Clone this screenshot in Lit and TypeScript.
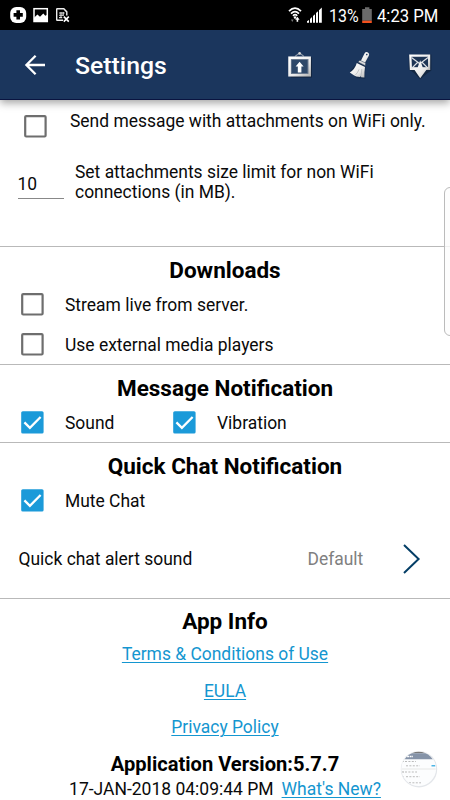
import { LitElement, html, css, svg } from "lit";
import { customElement, property } from "lit/decorators.js";

@customElement("check-box")
class CheckBox extends LitElement {
  @property({ type: Boolean }) checked = false;
  static styles = css`
    :host { display: block; width: 23px; height: 23px; flex: none; }
    svg { display: block; }
  `;
  render() {
    return html`<svg width="23" height="23" viewBox="0 0 23 23">
      ${this.checked
        ? svg`<rect x="0.2" y="0.2" width="22.4" height="22.3" rx="1.6" fill="#1b9ad9"/>
              <path d="M3.4 11.4 L8.9 16.8 L19.6 6" fill="none" stroke="#fff" stroke-width="2.3"/>`
        : svg`<rect x="1.2" y="1.1" width="20.4" height="20.4" rx="1" fill="#fff" stroke="#6e6e6e" stroke-width="2.2"/>`}
    </svg>`;
  }
}

@customElement("status-bar")
class StatusBar extends LitElement {
  static styles = css`
    :host { display: flex; height: 30px; background: #000; color: #fff; box-sizing: border-box; justify-content: space-between; }
    svg { display: block; flex: none; }
    .txt { font-size: 18.5px; line-height: 32px; height: 30px; white-space: nowrap; transform-origin: 0 50%; }
    .pct { width: 29px; transform: scaleX(0.86); }
    .time { width: 73px; transform: scaleX(0.9); }
    .right { display: flex; }
  `;
  render() {
    return html`
      <svg width="80" height="30" viewBox="0 0 80 30">
        <rect x="10.2" y="7" width="16" height="16" rx="6" fill="#fff"/>
        <path d="M18.2 10.3v9.2M13.6 14.9h9.2" stroke="#000" stroke-width="3.6"/>
        <rect x="34" y="8.7" width="13.3" height="12.8" fill="none" stroke="#fff" stroke-width="1.5"/>
        <path d="M34 21.5v-3.7l3.4-3.2 2.6 2.2 3.3-3.2 2 2.2 2-1v6.7z" fill="#fff"/>
        <path d="M63 20.3h-5.8a.5.5 0 0 1-.5-.5V9.2a.5.5 0 0 1 .5-.5h6.6l3 3.2v3.7" fill="none" stroke="#eee" stroke-width="1.4"/>
        <path d="M59 13h5.6M59 15.3h4.6M59 17.6h3.2M61 12v6M63.2 12v4" fill="none" stroke="#ddd" stroke-width="1.1"/>
        <path d="M63.8 16.6l5 5M68.8 16.6l-5 5" stroke="#fff" stroke-width="1.6"/>
      </svg>
      <div class="right">
        <svg width="41" height="30" viewBox="288 0 41 30">
          <path d="M289 11.2q6-6.2 12 0M291 13.6q4-4 8 0M293 15.8q2.1-2.2 4.2 0" fill="none" stroke="#fff" stroke-width="1.7"/>
          <circle cx="295" cy="17.5" r="1.2" fill="#fff"/>
          <path d="M291 19.5h2.6l-1.3 2.5z" fill="#777"/>
          <path d="M297.4 21.8v-3" stroke="#fff" stroke-width="1.6"/>
          <path d="M295.2 19.7h4.4l-2.2-2.9z" fill="#fff"/>
          <path d="M307 22.8v-1.5l2-1.3v2.8zM310 22.8v-3.9l2-1.8v5.7zM313 22.8v-6.7l2-1.9v8.6zM316 22.8v-9.7l2-1.9v11.6zM319 22.8v-12.6l2.8-2.7v15.3z" fill="#fff"/>
        </svg>
        <div class="txt pct">13%</div>
        <svg width="19" height="30" viewBox="358 0 19 30">
          <path d="M365 7.2h4.4v1.8h2.4v11.7h-9.6V9h2.8z" fill="#6b6b6b"/>
          <path d="M362.2 20.7h9.6v2.3h-9.6z" fill="#f4511e"/>
        </svg>
        <div class="txt time">4:23 PM</div>
      </div>`;
  }
}

@customElement("app-bar")
class AppBar extends LitElement {
  static styles = css`
    :host { display: flex; height: 70px; box-sizing: border-box; background: #1b365d; border-bottom: 1px solid #0a1440; color: #fff; position: relative; align-items: center; box-shadow: 0 3px 8px 0 rgba(0,0,0,.36); }
    svg { display: block; flex: none; }
    .title { font-size: 24.8px; font-weight: 500; line-height: 30px; width: 205px; margin-top: 3px; }
  `;
  render() {
    return html`
      <svg width="75" height="69" viewBox="0 30 75 69">
        <path d="M45 65H27M35.6 55.8L26.4 65l9.2 9.2" fill="none" stroke="#fff" stroke-width="2.3"/>
      </svg>
      <div class="title">Settings</div>
      <svg width="170" height="69" viewBox="280 30 170 69">
        <defs>
          <linearGradient id="m" x1="0" y1="0" x2="1" y2="1">
            <stop offset="0" stop-color="#fff"/><stop offset=".6" stop-color="#ebebeb"/><stop offset="1" stop-color="#b9b9b9"/>
          </linearGradient>
        </defs>
        <path d="M288 57.3h23.8v20.2h-21z" fill="#0c1728" opacity=".65"/>
        <path d="M295 56.4l4.6-3.4 4.3 3.4" fill="none" stroke="#8e99a8" stroke-width="1.1"/>
        <circle cx="299.6" cy="53.4" r="1.3" fill="#d5d5d5"/>
        <rect x="289.6" y="57.8" width="20" height="17.4" fill="#2e4869" stroke="url(#m)" stroke-width="2.7"/>
        <rect x="291.3" y="59.5" width="16.6" height="14" fill="none" stroke="#758397" stroke-width=".7"/>
        <path d="M299.6 61.8l4 4.7h-2.2v6h-3.6v-6h-2.2z" fill="#fff"/>

        <path d="M350 71l8-9 9.5-9 1.4 1.2-3.5 10.2-.2 14.3-8.4-.4z" fill="#0c1728" opacity=".35"/>
        <path d="M360.6 61.3l3.9-7.8q1.3-2.2 3.5-1.1 2 1.2.8 3.4l-4.2 7.6z" fill="url(#m)"/>
        <circle cx="366.8" cy="54.6" r=".8" fill="#1b365d"/>
        <path d="M357.9 62l2-1.8 5.8 2.9-.4 2.6z" fill="#d9d9d9" stroke="#263b57" stroke-width=".5"/>
        <path d="M356.8 63l8.2 4q-.8 5.5-.6 10.6l-3.2-.3-.2-1.4-1 1.2-3.8-.5-2.4-1.4-4-2.8q4.9-2.6 7-9.4z" fill="url(#m)"/>
        <path d="M360.8 76q1-3.8 1-7M355.4 75q2.6-2.6 3.6-5.6" stroke="#a3a7ad" stroke-width=".6" fill="none"/>

        <path d="M408.8 55l22.6-.6v16.2l-4 2.6-7.2 6-6.8-6.6-4.6-3.2z" fill="#0c1728" opacity=".5"/>
        <path d="M410.3 55.6h18.8v13.2h-18.2z" fill="#1d3454" stroke="url(#m)" stroke-width="2.2"/>
        <path d="M411.5 57.5l8.3 6.3 8.3-6.3M411.5 68.5l6-6M428.3 68.5l-6-6" fill="none" stroke="#dfe2e6" stroke-width="1.1"/>
        <path d="M420.2 60.2l2.5 7.1h5.6l-8.1 11-7.5-11h5z" fill="url(#m)"/>
      </svg>`;
  }
}

@customElement("app-root")
class AppRoot extends LitElement {
  static styles = css`
    :host { display: block; position: relative; width: 450px; height: 800px; overflow: hidden; background: #fff; font-family: Roboto, "Liberation Sans", sans-serif; font-size: 17.45px; line-height: 20.5px; color: #0a0a0a; }
    section { box-sizing: border-box; border-bottom: 1px solid #b9b9b9; display: flex; flex-direction: column; }
    .attach { height: 147px; }
    .down { height: 118px; }
    .msg { height: 78px; }
    .quick { height: 156px; }
    .info { border: 0; align-items: center; }
    .row { display: flex; align-items: center; height: 40px; padding-left: 21px; flex: none; white-space: nowrap; }
    .row check-box { margin-right: 21px; margin-bottom: 2px; }
    h2 { font-size: 22.5px; line-height: 26px; font-weight: 700; margin: 10px 0 2px; text-align: center; color: #000; flex: none; }
    .msg h2, .quick h2 { margin: 9.5px 0 2.5px; }
    .info h2 { margin: 9px 0 10px; }
    .row.wifi { height: 24px; padding: 14px 0 0 24px; align-items: flex-start; }
    .row.wifi check-box { margin: 0.5px 23px 0 0; }
    .wifi span { margin-top: -3px; }
    .limit { display: flex; margin-top: 23.5px; padding-left: 17.5px; }
    .num { width: 46.5px; height: 26px; margin: 11.5px 11px 0 0; border-bottom: 1px solid #888; line-height: 22px; box-sizing: border-box; }
    .sound { width: 108px; }
    .alert { display: flex; align-items: center; height: 40px; margin-top: 18.5px; padding-left: 18.5px; white-space: nowrap; }
    .name { width: 289px; }
    .val { color: #808080; width: 94px; }
    .alert svg { margin-bottom: 1px; }
    a { color: #1496d0; text-decoration: underline; text-decoration-thickness: 1.2px; text-underline-offset: 2px; }
    .link { margin-bottom: 16px; }
    .link.last { margin-bottom: 14px; }
    .ver { font-size: 20.1px; font-weight: 700; line-height: 24px; color: #000; margin-bottom: 3px; }
    .date { display: flex; gap: 8px; white-space: nowrap; font-size: 17.5px; }
    .edge { position: absolute; left: 444px; top: 187px; width: 12px; height: 149px; box-sizing: border-box; border: 1px solid #bbb; border-radius: 7px; background: rgba(252,252,252,.8); }
    .bubble { position: absolute; left: 400px; top: 750px; }
  `;
  render() {
    return html`
      <status-bar></status-bar>
      <app-bar></app-bar>
      <section class="attach">
        <div class="row wifi"><check-box></check-box><span>Send message with attachments on WiFi only.</span></div>
        <div class="limit"><div class="num">10</div><div>Set attachments size limit for non WiFi<br>connections (in MB).</div></div>
      </section>
      <section class="down">
        <h2>Downloads</h2>
        <div class="row"><check-box></check-box><span>Stream live from server.</span></div>
        <div class="row"><check-box></check-box><span>Use external media players</span></div>
      </section>
      <section class="msg">
        <h2>Message Notification</h2>
        <div class="row"><check-box checked></check-box><span class="sound">Sound</span><check-box checked></check-box><span>Vibration</span></div>
      </section>
      <section class="quick">
        <h2>Quick Chat Notification</h2>
        <div class="row"><check-box checked></check-box><span>Mute Chat</span></div>
        <div class="alert"><span class="name">Quick chat alert sound</span><span class="val">Default</span>
          <svg width="20" height="32" viewBox="0 0 20 32"><path d="M2 2L16.6 16 2 30" fill="none" stroke="#043e66" stroke-width="2"/></svg>
        </div>
      </section>
      <section class="info">
        <h2>App Info</h2>
        <a class="link">Terms &amp; Conditions of Use</a>
        <a class="link">EULA</a>
        <a class="link last">Privacy Policy</a>
        <div class="ver">Application Version:5.7.7</div>
        <div class="date"><span>17-JAN-2018 04:09:44 PM</span><a>What's New?</a></div>
      </section>
      <div class="edge"></div>
      <svg class="bubble" width="38" height="38" viewBox="0 0 38 38">
        <defs><clipPath id="c"><circle cx="18.7" cy="18.7" r="17"/></clipPath></defs>
        <circle cx="19" cy="19.2" r="18.2" fill="#e3e6ea"/>
        <circle cx="18.7" cy="18.7" r="17.4" fill="#fcfdfe"/>
        <g clip-path="url(#c)">
          <path d="M0 0h38v3.3H0z" fill="#777"/><path d="M0 3.3h38v6H0z" fill="#8593a8"/>
          <path d="M7 6.5h6" stroke="#fff" stroke-width="1.4" stroke-dasharray="2 .6"/>
          <path d="M5 11.5h11M6 15.8h14M5 22h12M6 26.7h14M9 32.8h12" stroke="#bbb" stroke-width="1" stroke-dasharray="2 1.4"/>
          <path d="M2 11.5h2M2 22h2M2 26.7h2" stroke="#aaa" stroke-width="1"/>
          <path d="M0 19h38" stroke="#ddd" stroke-width=".7"/>
          <path d="M31.5 15.8h4" stroke="#4db5e5" stroke-width="1.6"/>
        </g>
      </svg>`;
  }
}
